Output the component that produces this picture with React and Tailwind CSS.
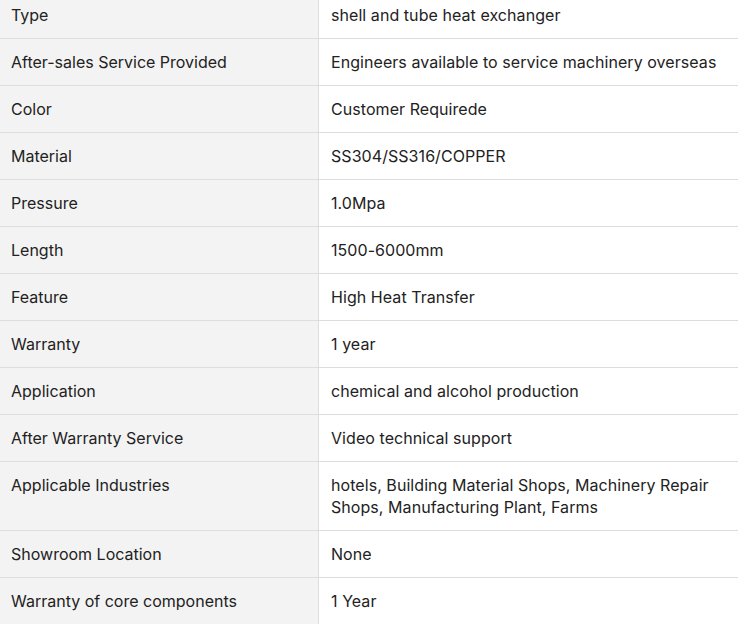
import React from 'react';

const rows = [
  ['Type', 'shell and tube heat exchanger'],
  ['After-sales Service Provided', 'Engineers available to service machinery overseas'],
  ['Color', 'Customer Requirede'],
  ['Material', 'SS304/SS316/COPPER'],
  ['Pressure', '1.0Mpa'],
  ['Length', '1500-6000mm'],
  ['Feature', 'High Heat Transfer'],
  ['Warranty', '1 year'],
  ['Application', 'chemical and alcohol production'],
  ['After Warranty Service', 'Video technical support'],
  ['Applicable Industries', 'hotels, Building Material Shops, Machinery Repair Shops, Manufacturing Plant, Farms'],
  ['Showroom Location', 'None'],
  ['Warranty of core components', '1 Year'],
];

const App = () => {
  return (
    <div className="w-[738px] h-[624px] overflow-hidden bg-white font-['Inter',sans-serif] text-[16px] leading-[22px] text-[#222]">
      <div className="-mt-[9px]">
        {rows.map(([label, value]) => (
          <div key={label} className="flex border-t border-[#dddddd]">
            <div className="w-[319px] shrink-0 bg-[#f3f3f3] border-r border-[#dddddd] pl-[11px] pr-3 py-3">
              {label}
            </div>
            <div className="flex-1 pl-3 pr-3 py-3 tracking-[0.06px]">{value}</div>
          </div>
        ))}
      </div>
    </div>
  );
};

export default App;
